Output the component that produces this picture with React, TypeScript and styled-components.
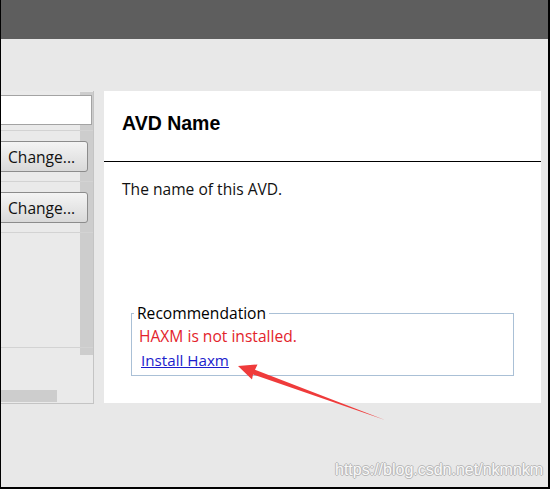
import * as React from "react";
import styled, { createGlobalStyle } from "styled-components";

const GlobalStyle = createGlobalStyle`
  html, body {
    margin: 0;
    padding: 0;
    background: #000000;
  }
  * {
    box-sizing: border-box;
  }
`;

const Frame = styled.div`
  position: relative;
  width: 550px;
  height: 489px;
  padding: 0 2px 2px 1px;
  background: #000000;
  overflow: hidden;
`;

const Window = styled.div`
  width: 547px;
  height: 487px;
  background: #e8e8e8;
  display: flex;
  flex-direction: column;
`;

const TitleBar = styled.div`
  height: 39px;
  background: #5e5e5e;
`;

const Body = styled.div`
  display: flex;
  align-items: flex-start;
  gap: 10px;
  padding-top: 52px;
`;

const LeftPanel = styled.div`
  width: 93px;
  height: 313px;
  display: grid;
  grid-template-columns: 100%;
  grid-template-rows: 40px 51px 51px 115px 55px;
  background: #eaeaea;
  border-right: 1px solid #c4c4c4;
  border-bottom: 1px solid #c4c4c4;
  overflow: hidden;
`;

const VScroll = styled.div`
  grid-column: 1;
  grid-row: 1 / 6;
  justify-self: end;
  align-self: start;
  width: 13px;
  height: 263px;
  margin-top: 1px;
  background: #cdcdcd;
`;

const Row = styled.div<{ $row: number; $top: number }>`
  grid-column: 1;
  grid-row: ${(p) => p.$row};
  display: flex;
  align-items: flex-start;
  padding-top: ${(p) => p.$top}px;
  border-bottom: 1px solid #d3d3d3;
`;

const BottomRow = styled.div`
  grid-column: 1;
  grid-row: 5;
  display: flex;
  align-items: flex-end;
  padding-bottom: 1px;
`;

const HScroll = styled.div`
  width: 56px;
  height: 12px;
  background: #cdcdcd;
`;

const TextField = styled.div`
  flex: none;
  width: 102px;
  height: 30px;
  margin-left: -11px;
  background: #ffffff;
  border: 1px solid #a3a3a3;
`;

const ChangeButton = styled.button`
  flex: none;
  width: 98px;
  height: 31px;
  margin-left: -11px;
  padding: 0 0 0 17px;
  text-align: left;
  font-family: "Open Sans", "Noto Sans", sans-serif;
  font-size: 15.6px;
  color: #111111;
  background: linear-gradient(#f4f4f4, #d9d9d9);
  border: 1px solid #8c8c8c;
  border-radius: 3px;
`;

const InfoPanel = styled.div`
  width: 437px;
  height: 312px;
  background: #ffffff;
  display: flex;
  flex-direction: column;
`;

const InfoHeader = styled.div`
  height: 71px;
  padding: 20px 0 0 18px;
  border-bottom: 1px solid #000000;
`;

const InfoTitle = styled.h1`
  margin: 0;
  font-family: "Liberation Sans", Arial, sans-serif;
  font-size: 19.5px;
  line-height: 24px;
  font-weight: bold;
  color: #000000;
`;

const InfoText = styled.p`
  margin: 17px 0 0 18px;
  font-family: "Open Sans", "Noto Sans", sans-serif;
  font-size: 15.6px;
  line-height: 20px;
  color: #111111;
`;

const RecommendBox = styled.fieldset`
  width: 383px;
  margin: 104px 0 0 27px;
  padding: 3px 0 5px 2px;
  border: 1px solid #aac0d6;
  min-inline-size: 0;
  font-family: "Open Sans", "Noto Sans", sans-serif;
  font-size: 15.6px;
  line-height: 20px;
`;

const RecommendLegend = styled.legend`
  padding: 0 3px;
  color: #000000;
`;

const Warning = styled.div`
  margin-left: 5px;
  color: #e3232b;
`;

const InstallLink = styled.a`
  display: inline-block;
  margin: 4px 0 0 7px;
  font-size: 15.2px;
  color: #1d1dcc;
  text-decoration: underline;
  cursor: pointer;
`;

const Annotation = styled.svg`
  position: absolute;
  left: 0;
  top: 0;
  pointer-events: none;
`;

const Watermark = styled.div`
  position: absolute;
  left: 335px;
  top: 462px;
  font-family: "Liberation Sans", Arial, sans-serif;
  font-size: 16px;
  line-height: 16px;
  color: rgba(255, 255, 255, 0.92);
  text-shadow: 1px 0 #b9b9b9, -1px 0 #b9b9b9, 0 1px #b9b9b9, 0 -1px #b9b9b9;
  pointer-events: none;
`;

export default function App(): JSX.Element {
  return (
    <Frame>
      <GlobalStyle />
      <Window>
        <TitleBar />
        <Body>
          <LeftPanel>
            <VScroll />
            <Row $row={1} $top={4}>
              <TextField />
            </Row>
            <Row $row={2} $top={10}>
              <ChangeButton>Change...</ChangeButton>
            </Row>
            <Row $row={3} $top={10}>
              <ChangeButton>Change...</ChangeButton>
            </Row>
            <Row $row={4} $top={0} />
            <BottomRow>
              <HScroll />
            </BottomRow>
          </LeftPanel>
          <InfoPanel>
            <InfoHeader>
              <InfoTitle>AVD Name</InfoTitle>
            </InfoHeader>
            <InfoText>The name of this AVD.</InfoText>
            <RecommendBox>
              <RecommendLegend>Recommendation</RecommendLegend>
              <Warning>HAXM is not installed.</Warning>
              <InstallLink>Install Haxm</InstallLink>
            </RecommendBox>
          </InfoPanel>
        </Body>
      </Window>
      <Annotation width="550" height="489" viewBox="0 0 550 489">
        <polygon
          points="238,366 257.5,364.5 255,369.8 385,420 253,374.5 252,379.5"
          fill="#ef3b3b"
        />
      </Annotation>
      <Watermark>https://blog.csdn.net/nkmnkm</Watermark>
    </Frame>
  );
}
